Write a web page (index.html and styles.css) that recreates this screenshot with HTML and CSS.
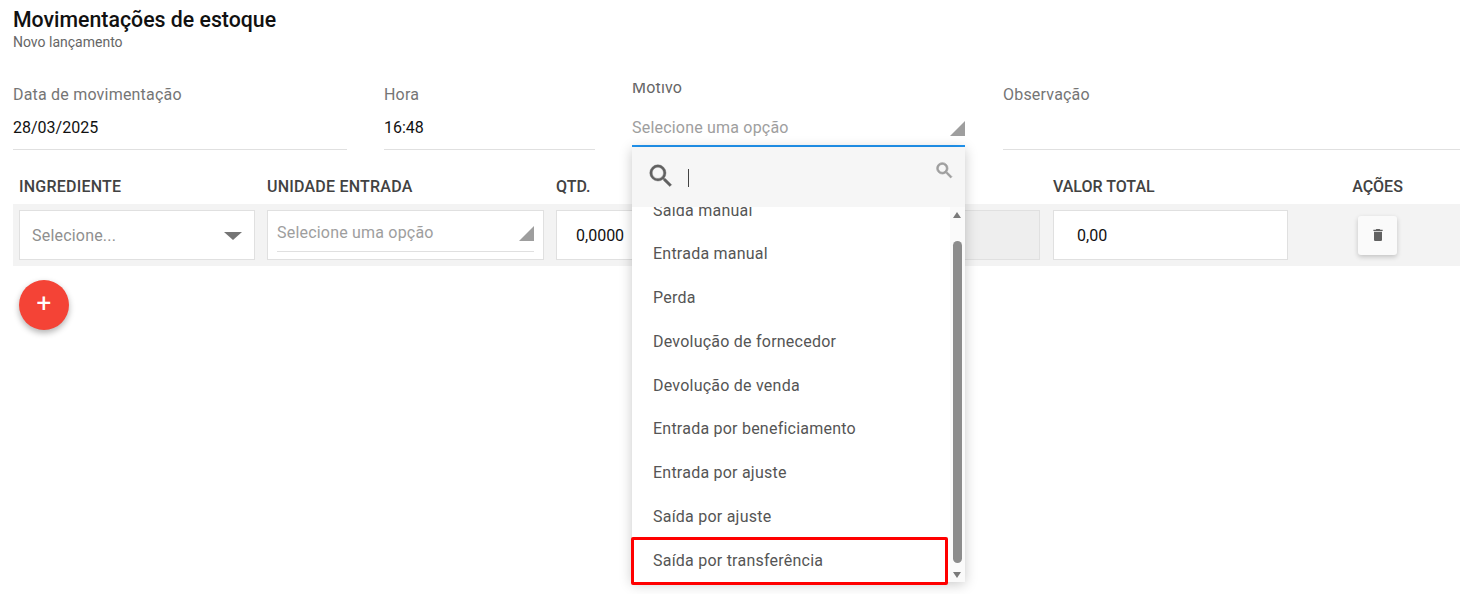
FILE: index.html
```html
<!DOCTYPE html>
<html>
<head>
<meta charset="utf-8">
<title>Movimentações de estoque</title>
<link rel="stylesheet" href="styles.css">
</head>
<body>
  <div class="page">
    <h1 class="title">Movimentações de estoque</h1>
    <div class="subtitle">Novo lançamento</div>

    <div class="form-row">
      <div class="field f-data">
        <label>Data de movimentação</label>
        <div class="value">28/03/2025</div>
      </div>
      <div class="field f-hora">
        <label>Hora</label>
        <div class="value">16:48</div>
      </div>
      <div class="field f-motivo">
        <label class="raised">Motivo</label>
        <div class="value placeholder focused">Selecione uma opção<span class="corner"></span></div>

        <div class="dropdown">
          <div class="search">
            <svg class="search-big" width="30" height="30" viewBox="0 0 24 24"><path fill="#616161" stroke="#616161" stroke-width=".3" d="M15.5 14h-.79l-.28-.27A6.47 6.47 0 0 0 16 9.5 6.5 6.5 0 1 0 9.5 16c1.61 0 3.09-.59 4.23-1.57l.27.28v.79l5 4.99L20.49 19l-4.99-5zm-6 0C7.01 14 5 11.99 5 9.5S7.01 5 9.5 5 14 7.01 14 9.5 11.99 14 9.5 14z"/></svg>
            <span class="caret"></span>
            <svg class="search-small" width="21" height="21" viewBox="0 0 24 24"><path fill="#9e9e9e" stroke="#9e9e9e" stroke-width=".8" d="M15.5 14h-.79l-.28-.27A6.47 6.47 0 0 0 16 9.5 6.5 6.5 0 1 0 9.5 16c1.61 0 3.09-.59 4.23-1.57l.27.28v.79l5 4.99L20.49 19l-4.99-5zm-6 0C7.01 14 5 11.99 5 9.5S7.01 5 9.5 5 14 7.01 14 9.5 11.99 14 9.5 14z"/></svg>
          </div>
          <div class="list-wrap">
            <ul class="options">
              <li>Saída manual</li>
              <li>Entrada manual</li>
              <li>Perda</li>
              <li>Devolução de fornecedor</li>
              <li>Devolução de venda</li>
              <li>Entrada por beneficiamento</li>
              <li>Entrada por ajuste</li>
              <li>Saída por ajuste</li>
              <li>Saída por transferência</li>
            </ul>
            <div class="scrollbar">
              <span class="arrow up"></span>
              <span class="thumb"></span>
              <span class="arrow bottom"></span>
            </div>
          </div>
          <div class="marked-frame"></div>
        </div>
      </div>
      <div class="field f-obs">
        <label>Observação</label>
        <div class="value"></div>
      </div>
    </div>

    <div class="table-head">
      <div class="c-ing">INGREDIENTE</div>
      <div class="c-uni">UNIDADE ENTRADA</div>
      <div class="c-qtd">QTD.</div>
      <div class="c-val">VALOR TOTAL</div>
      <div class="c-act">AÇÕES</div>
    </div>

    <div class="table-row">
      <div class="box c-ing select-box">Selecione...<span class="select-arrow"></span></div>
      <div class="box c-uni">
        <div class="inner-select">Selecione uma opção<span class="corner"></span></div>
      </div>
      <div class="box c-qtd num">0,0000</div>
      <div class="box c-dis"></div>
      <div class="box c-val num">0,00</div>
      <div class="c-act">
        <button class="trash">
          <svg width="16" height="16" viewBox="0 0 24 24"><path fill="#616161" d="M6 19c0 1.1.9 2 2 2h8c1.1 0 2-.9 2-2V7H6v12zM19 4h-3.5l-1-1h-5l-1 1H5v2h14V4z"/></svg>
        </button>
      </div>
    </div>

    <button class="fab">+</button>
  </div>
</body>
</html>
```

FILE: styles.css
```css
* {
  box-sizing: border-box;
}

body {
  margin: 0;
  background: #fff;
  font-family: Roboto, "Liberation Sans", sans-serif;
  overflow: hidden;
}

.page {
  height: 594px;
  padding: 8px 6px 0 13px;
}

.title {
  margin: 0;
  font-size: 21.3px;
  line-height: 23px;
  font-weight: 500;
  color: #111;
}

.subtitle {
  font-size: 14px;
  line-height: 15px;
  margin-top: 4px;
  color: #666;
}

/* top form */
.form-row {
  display: flex;
  margin-top: 27px;
  height: 74px;
}

.field {
  position: relative;
  padding-top: 8px;
}

.f-data { width: 334px; margin-right: 37px; }
.f-hora { width: 211px; margin-right: 37px; }
.f-motivo { width: 334px; margin-right: 37px; }
.f-obs { width: 457px; }

.field label {
  display: block;
  font-size: 16px;
  line-height: 19px;
  color: #757575;
  letter-spacing: .2px;
}

.field label.raised {
  position: absolute;
  top: 1px;
  left: 0;
  color: #666;
  clip-path: inset(5px 0 0 0);
}

.value {
  position: relative;
  height: 46px;
  padding-top: 14px;
  font-size: 16px;
  line-height: 19px;
  color: #111;
  border-bottom: 1px solid #e0e0e0;
}

.value.placeholder {
  color: #9e9e9e;
  letter-spacing: .2px;
}

.value.focused {
  height: 43px;
  width: 333px;
  margin-top: 19px;
  border-bottom: 2px solid #2196f3;
}

.corner {
  position: absolute;
  right: 0;
  bottom: 9px;
  width: 0;
  height: 0;
  border-left: 15px solid transparent;
  border-bottom: 15px solid #9e9e9e;
}

/* the open list */
.dropdown {
  position: absolute;
  top: 70px;
  left: 0;
  width: 333px;
  height: 435px;
  background: #fff;
  box-shadow: 0 2px 12px rgba(0, 0, 0, .22);
  z-index: 5;
}

.search {
  position: relative;
  height: 60px;
  background: #f6f6f6;
}

.search-big {
  position: absolute;
  left: 14px;
  top: 14px;
}

.caret {
  position: absolute;
  left: 56px;
  top: 22px;
  width: 1px;
  height: 18px;
  background: #444;
}

.search-small {
  position: absolute;
  left: 302px;
  top: 13px;
}

.list-wrap {
  position: relative;
  height: 375px;
  overflow: hidden;
}

.options {
  list-style: none;
  margin: -18.5px 0 0;
  padding: 0;
}

.options li {
  height: 43.8px;
  line-height: 43.8px;
  padding-left: 21px;
  font-size: 16px;
  letter-spacing: .23px;
  color: #555;
}

.marked-frame {
  position: absolute;
  left: -1px;
  top: 390px;
  width: 317px;
  height: 48px;
  border: 3px solid #f00;
  border-radius: 2px;
}

.scrollbar {
  position: absolute;
  right: 0;
  top: 0;
  width: 15px;
  height: 100%;
  background: #fafafa;
}

.thumb {
  position: absolute;
  left: 3px;
  top: 34px;
  width: 9px;
  height: 322px;
  border-radius: 5px;
  background: #8c8c8c;
}

.arrow {
  position: absolute;
  left: 3px;
  width: 0;
  height: 0;
  border-left: 4.5px solid transparent;
  border-right: 4.5px solid transparent;
}

.arrow.up {
  top: 5px;
  border-bottom: 6px solid #7a7a7a;
}

.arrow.bottom {
  bottom: 4px;
  border-top: 6px solid #7a7a7a;
}

/* table */
.table-head {
  display: flex;
  height: 31px;
  margin-top: 22px;
  padding-left: 6px;
  font-size: 16px;
  line-height: 28px;
  font-weight: 500;
  color: #424242;
}

.c-ing { width: 236px; margin-right: 12px; }
.c-uni { width: 277px; margin-right: 12px; }
.c-qtd { width: 100px; }
.c-dis { width: 384px; margin-right: 13px; }
.c-val { width: 235px; }
.c-act { flex: 1; text-align: center; padding-left: 7px; }

.table-head .c-ing,
.table-head .c-uni {
  letter-spacing: .22px;
}

.table-head .c-val { margin-left: 397px; }

.table-row {
  display: flex;
  align-items: center;
  width: 1447px;
  height: 62px;
  padding-left: 6px;
  background: #f3f3f3;
}

.box {
  position: relative;
  height: 50px;
  background: #fff;
  border: 1px solid #e0e0e0;
}

.select-box {
  padding: 15px 0 0 12px;
  font-size: 16px;
  line-height: 19px;
  color: #8f8f8f;
  letter-spacing: .2px;
}

.select-arrow {
  position: absolute;
  right: 12px;
  top: 21px;
  width: 0;
  height: 0;
  border-left: 9px solid transparent;
  border-right: 9px solid transparent;
  border-top: 8px solid #757575;
}

.inner-select {
  position: relative;
  height: 41px;
  margin: 0 9px;
  padding-top: 12px;
  font-size: 16px;
  line-height: 19px;
  color: #9e9e9e;
  letter-spacing: .2px;
  border-bottom: 1px solid #e0e0e0;
}

.inner-select .corner {
  bottom: 10px;
}

.num {
  padding: 15px 0 0 19px;
  font-size: 16px;
  line-height: 19px;
  color: #111;
}

.num.c-val {
  padding-left: 23px;
}

.c-dis {
  background: #eee;
}

.c-qtd.num {
  border-right: 0;
}

.trash {
  display: inline-flex;
  align-items: center;
  justify-content: center;
  width: 39px;
  height: 39px;
  padding: 0;
  background: #fafafa;
  border: 0;
  border-radius: 3px;
  box-shadow: 0 2px 5px rgba(0, 0, 0, .2);
}

.fab {
  display: block;
  width: 50px;
  height: 50px;
  margin: 14px 0 0 6px;
  padding: 0 0 4px;
  border: 0;
  border-radius: 50%;
  background: #f44336;
  color: #fff;
  font-family: Roboto, sans-serif;
  font-size: 26px;
  line-height: 26px;
  box-shadow: 0 3px 6px rgba(0, 0, 0, .3);
}
```
